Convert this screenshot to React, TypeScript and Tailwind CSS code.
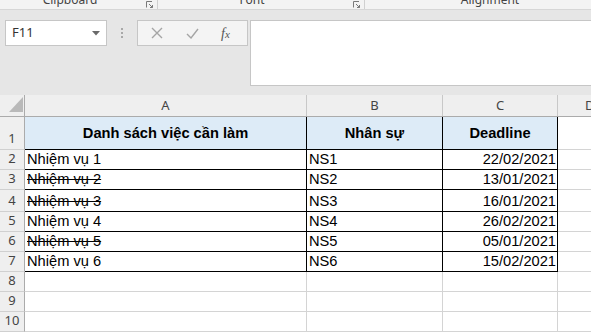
import React from "react";

const rows = [
  { n: 1, h: 33 },
  { n: 2, h: 20, a: "Nhiệm vụ 1", b: "NS1", c: "22/02/2021" },
  { n: 3, h: 20, a: "Nhiệm vụ 2", b: "NS2", c: "13/01/2021", strike: true },
  { n: 4, h: 22, a: "Nhiệm vụ 3", b: "NS3", c: "16/01/2021", strike: true },
  { n: 5, h: 20, a: "Nhiệm vụ 4", b: "NS4", c: "26/02/2021" },
  { n: 6, h: 20, a: "Nhiệm vụ 5", b: "NS5", c: "05/01/2021", strike: true },
  { n: 7, h: 20, a: "Nhiệm vụ 6", b: "NS6", c: "15/02/2021" },
  { n: 8, h: 20 },
  { n: 9, h: 20 },
  { n: 10, h: 20 },
];

function Launcher() {
  return (
    <svg width="8" height="7" viewBox="0 0 8 7" className="block">
      <path d="M0.5 6.5 V0.5 H6" fill="none" stroke="#7a7a7a" strokeWidth="1" />
      <path d="M3 3 L6.5 6.5 M4 6.5 H6.5 V4" fill="none" stroke="#7a7a7a" strokeWidth="1" />
    </svg>
  );
}

export default function App() {
  return (
    <div
      className="w-[591px] h-[332px] overflow-hidden bg-[#e6e6e6] relative"
      style={{ fontFamily: "'Liberation Sans', Arial, sans-serif" }}
    >
      {/* ribbon group labels */}
      <div
        className="h-[10px] bg-[#f3f3f3] border-b border-[#d6d6d6] flex overflow-hidden text-[12px] leading-[12px] text-[#444]"
        style={{ fontFamily: "'Noto Sans', sans-serif" }}
      >
        <div className="w-[158px] flex shrink-0 border-r border-[#d0d0d0] h-[9px]">
          <div className="w-[140px] text-center -mt-[6px]">Clipboard</div>
          <div className="ml-[6px] mt-[1px]"><Launcher /></div>
        </div>
        <div className="w-[207px] flex shrink-0 border-r border-[#d0d0d0] h-[9px]">
          <div className="w-[188px] text-center -mt-[6px]">Font</div>
          <div className="ml-[7px] mt-[1px]"><Launcher /></div>
        </div>
        <div className="w-[250px] shrink-0 text-center -mt-[6px]">Alignment</div>
      </div>

      {/* formula bar */}
      <div className="h-[85px] flex items-start pt-[10px]">
        <div
          className="ml-[5px] w-[102px] h-[26px] bg-white border border-[#c6c6c6] flex items-center pl-[6px] pr-[6px] text-[13px] text-[#333]"
          style={{ fontFamily: "'Noto Sans', sans-serif" }}
        >
          <span className="flex-1">F11</span>
          <svg width="8" height="5" viewBox="0 0 8 5"><path d="M0 0 H8 L4 4.5 Z" fill="#6a6a6a" /></svg>
        </div>
        <div className="w-[30px] h-[26px] flex flex-col items-center justify-center gap-[2px]">
          <div className="w-[2px] h-[2px] bg-[#a8a8a8]" />
          <div className="w-[2px] h-[2px] bg-[#a8a8a8]" />
          <div className="w-[2px] h-[2px] bg-[#a8a8a8]" />
        </div>
        <div className="w-[111px] h-[26px] bg-[#f4f4f4] border border-[#c6c6c6] flex items-center">
          <svg width="12" height="12" viewBox="0 0 12 12" className="ml-[13px]">
            <path d="M1 1 L11 11 M11 1 L1 11" stroke="#a5a5a5" strokeWidth="1.4" />
          </svg>
          <svg width="13" height="11" viewBox="0 0 13 11" className="ml-[23px]">
            <path d="M1 6 L5 10 L12 1" fill="none" stroke="#a5a5a5" strokeWidth="1.4" />
          </svg>
          <span
            className="ml-[22px] italic text-[14px] text-[#555]"
            style={{ fontFamily: "'Liberation Serif', serif" }}
          >
            f<span className="text-[11px]">x</span>
          </span>
        </div>
        <div className="ml-[2px] flex-1 h-[66px] bg-white border border-[#c6c6c6] border-r-0" />
      </div>

      {/* column headers */}
      <div
        className="flex h-[22px] bg-[#efefef] text-[13px] text-[#444] border-b border-[#ababab]"
        style={{ fontFamily: "'Noto Sans', sans-serif" }}
      >
        <div className="w-[25px] shrink-0 border-r border-[#ababab] relative">
          <svg width="14" height="15" viewBox="0 0 14 15" className="absolute left-[9px] top-[2px]">
            <path d="M14 0 V15 H0 Z" fill="#b9b9b9" />
          </svg>
        </div>
        <div className="w-[282px] shrink-0 border-r border-[#c8c8c8] flex items-center justify-center">A</div>
        <div className="w-[136px] shrink-0 border-r border-[#c8c8c8] flex items-center justify-center">B</div>
        <div className="w-[115px] shrink-0 border-r border-[#c8c8c8] flex items-center justify-center">C</div>
        <div className="flex-1 flex items-center pl-[27px]">D</div>
      </div>

      {/* rows */}
      {rows.map((r) => {
        const inTable = r.n <= 7;
        const bc = inTable ? "border-black" : "border-[#d4d4d4]";
        const isHead = r.n === 1;
        const base = isHead
          ? "bg-[#ddebf7] flex items-center justify-center font-bold"
          : "bg-white flex items-end pb-[1px]";
        return (
          <div key={r.n} className="flex" style={{ height: r.h }}>
            <div
              className="w-[25px] shrink-0 bg-[#efefef] border-r border-b border-r-[#ababab] border-b-[#d0d0d0] flex items-end justify-center pb-[1px] text-[13px] text-[#444]"
              style={{ fontFamily: "'Noto Sans', sans-serif" }}
            >
              {r.n}
            </div>
            <div className={`w-[282px] shrink-0 border-r border-b ${bc} ${base} ${isHead ? "" : "pl-[2px]"} text-[14.67px] leading-[17px] text-black`}>
              {isHead ? "Danh sách việc cần làm" : <span className={r.strike ? "line-through" : ""}>{r.a}</span>}
            </div>
            <div className={`w-[136px] shrink-0 border-r border-b ${bc} ${base} ${isHead ? "" : "pl-[2px]"} text-[14.67px] leading-[17px] text-black`}>
              {isHead ? "Nhân sự" : r.b}
            </div>
            <div className={`w-[115px] shrink-0 border-r border-b ${bc} ${base} ${isHead ? "" : "justify-end pr-[1px]"} text-[14.67px] leading-[17px] text-black`}>
              {isHead ? "Deadline" : r.c}
            </div>
            <div className="flex-1 bg-white border-b border-[#d4d4d4]" />
          </div>
        );
      })}
      <div className="h-[10px] bg-white" />
    </div>
  );
}
